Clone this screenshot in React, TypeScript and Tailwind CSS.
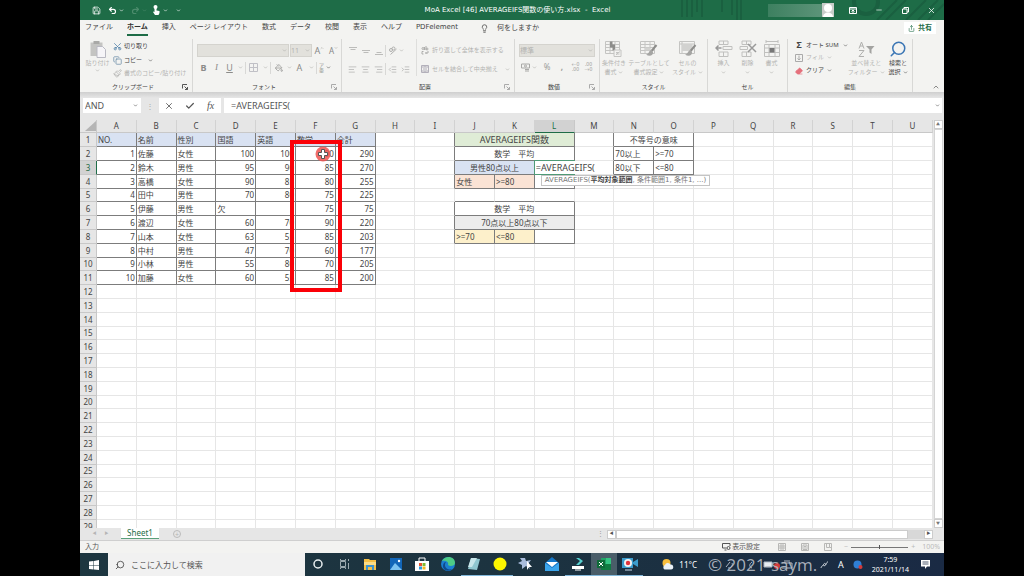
import React from 'react'
import { clsx } from 'clsx'
import {
  AlignCenter, AlignLeft, AlignRight, Check, ChevronDown, ChevronUp, Copy, Eraser,
  IndentDecrease, IndentIncrease, Lightbulb, Minus, PaintBucket, Paintbrush, Redo2, Save, Scissors,
  Search, Share, Undo2, X,
} from 'lucide-react'

const columns = 'ABCDEFGHIJKLMNOPQRSTU'.split('')

const students = [
  ['1', '佐藤', '女性', '100', '100', '90', '290'],
  ['2', '鈴木', '男性', '95', '90', '85', '270'],
  ['3', '高橋', '女性', '90', '85', '80', '255'],
  ['4', '田中', '男性', '70', '80', '75', '225'],
  ['5', '伊藤', '男性', '欠', '', '75', '75'],
  ['6', '渡辺', '女性', '60', '70', '90', '220'],
  ['7', '山本', '女性', '63', '55', '85', '203'],
  ['8', '中村', '男性', '47', '70', '60', '177'],
  ['9', '小林', '男性', '55', '80', '70', '205'],
  ['10', '加藤', '女性', '60', '55', '85', '200'],
]

type CellInfo = { text: string; span?: number; className?: string }

const cells: Record<string, CellInfo> = {
  J1: { text: 'AVERAGEIFS関数', span: 3, className: 'bg-[#dfecd6] text-center text-[9px]' },
  J2: { text: '数学　平均', span: 3, className: 'text-center' },
  J3: { text: '男性80点以上', span: 2, className: 'bg-[#d9e2f2] text-center' },
  J4: { text: '女性', className: 'bg-[#fae3d5]' },
  K4: { text: '>=80', className: 'bg-[#fae3d5]' },
  J6: { text: '数学　平均', span: 3, className: 'text-center' },
  J7: { text: '70点以上80点以下', span: 3, className: 'bg-[#ececec] text-center' },
  J8: { text: '>=70', className: 'bg-[#fdf0cb]' },
  K8: { text: '<=80', className: 'bg-[#fdf0cb]' },
  N1: { text: '不等号の意味', span: 2, className: 'text-center' },
  N2: { text: '70以上' },
  O2: { text: '>=70' },
  N3: { text: '80以下' },
  O3: { text: '<=80' },
}

const headings = ['NO.', '名前', '性別', '国語', '英語', '数学', '合計']
headings.forEach((text, i) => {
  cells[`${columns[i]}1`] = { text, className: 'bg-[#d9e2f2]' }
})
students.forEach((row, r) => {
  row.forEach((text, i) => {
    cells[`${columns[i]}${r + 2}`] = { text, className: /^\d/.test(text) ? 'text-right' : '' }
  })
})

// ranges that carry a black frame
const isBoxed = (c: number, r: number) =>
  (c >= 0 && c <= 6 && r >= 1 && r <= 11) ||
  (c >= 9 && c <= 11 && ((r >= 1 && r <= 4) || (r >= 6 && r <= 8))) ||
  (c >= 13 && c <= 14 && r >= 1 && r <= 3)

function Chevron({ dark }: { dark?: boolean }) {
  return <ChevronDown size={5} strokeWidth={3} className={clsx('shrink-0', dark ? 'text-[#555]' : 'text-[#b0b0ae]')} />
}

function Tool({ label, className, children }: { label: string; className?: string; children: React.ReactNode }) {
  return (
    <button aria-label={label} className={clsx('flex items-center justify-center', className ?? 'w-[13px]')}>
      {children}
    </button>
  )
}

function Launcher({ dark }: { dark?: boolean }) {
  return (
    <svg width="6" height="6" viewBox="0 0 12 12" fill="none" strokeWidth="2" className={dark ? 'stroke-[#555]' : 'stroke-[#aaa]'}>
      <path d="M1 9V1h9M5 5l6 6M11 6v5H6" />
    </svg>
  )
}

function Group({ title, className, launcher, children }: {
  title: string
  className?: string
  launcher?: 'dark' | 'light'
  children: React.ReactNode
}) {
  return (
    <section className={clsx('flex shrink-0 flex-col border-r border-[#d8d8d6]', className)}>
      <div className="flex-1">{children}</div>
      <div className="flex h-[10px] items-center px-1 text-[6px] text-[#444]">
        <span className="flex-1 text-center">{title}</span>
        {launcher && <Launcher dark={launcher === 'dark'} />}
      </div>
    </section>
  )
}

function TitleBar() {
  return (
    <header className="relative flex h-5 items-center bg-[#1e6c47] text-white">
      <svg className="absolute right-0 top-0 h-5 w-[270px]" viewBox="0 0 270 20" fill="none" stroke="#1a6040" strokeWidth="2">
        <path d="M8 0v17M13 0v17M18 0v17M23 0v12M28 0v17M48 0v12M58 0v15M63 0v20M67 0v20" />
        <circle cx="192" cy="2" r="12" strokeWidth="4" />
        <path d="M203 20 223 0M212 20 232 0M232 20 252 0M244 20 264 0M254 20 270 4" />
      </svg>
      <div className="relative flex flex-1 items-center pl-[11px]">
        <Tool label="上書き保存" className="w-[10px]"><Save size={9} /></Tool>
        <Tool label="元に戻す" className="ml-[6px] w-[10px]"><Undo2 size={9} strokeWidth={3} /></Tool>
        <span className="ml-[2px]"><ChevronDown size={5} strokeWidth={3} /></span>
        <Tool label="やり直し" className="ml-[6px] w-[10px] text-[#4d8c6d]"><Redo2 size={9} strokeWidth={3} /></Tool>
        <span className="ml-[2px] text-[#4d8c6d]"><ChevronDown size={5} strokeWidth={3} /></span>
        <Tool label="タッチ/マウス モードの切り替え" className="ml-[4px] w-[10px]">
          <svg width="9" height="10" viewBox="0 0 18 20" fill="#fff">
            <circle cx="7" cy="4" r="4" />
            <path d="M5 4h4v7l6 1v4l-2 4H6l-4-6 1-1 2 1z" />
          </svg>
        </Tool>
        <span className="ml-[2px]"><ChevronDown size={5} strokeWidth={3} /></span>
        <span className="ml-[8px]"><ChevronDown size={5} strokeWidth={3} /></span>
      </div>
      <h1 className="relative font-['DejaVu_Sans','Noto_Sans_CJK_JP',sans-serif] text-[7px]">MoA Excel [46] AVERAGEIFS関数の使い方.xlsx&nbsp; -&nbsp; Excel</h1>
      <div className="relative flex flex-1 items-center justify-end">
        <div className="h-[13px] w-[54px] bg-gradient-to-r from-[#3d8060] to-[#5c9479]" />
        <svg width="12" height="14" viewBox="0 0 12 14" className="mr-[6px] bg-[#c9cdca]" fill="#fff">
          <circle cx="6" cy="5" r="4" />
          <path d="M1 14c0-6 10-6 10 0z" />
        </svg>
        <Tool label="リボンの表示オプション" className="w-[26px]">
          <svg width="8" height="7" viewBox="0 0 16 14" fill="none" stroke="#fff" strokeWidth="2">
            <path d="M1 1h14v12H1zM1 4h14M8 12V7M5 9l3-3 3 3" />
          </svg>
        </Tool>
        <Tool label="最小化" className="w-[26px]"><Minus size={8} strokeWidth={2} /></Tool>
        <Tool label="元に戻す (縮小)" className="w-[26px]">
          <svg width="7" height="7" viewBox="0 0 14 14" fill="none" stroke="#fff" strokeWidth="2">
            <path d="M1 4h9v9H1zM4 4V1h9v9h-3" />
          </svg>
        </Tool>
        <Tool label="閉じる" className="w-[26px]"><X size={9} strokeWidth={2} /></Tool>
      </div>
    </header>
  )
}

const tabs = ['ファイル', 'ホーム', '挿入', 'ページ レイアウト', '数式', 'データ', '校閲', '表示', 'ヘルプ', 'PDFelement']

function TabRow() {
  return (
    <nav className="flex h-4 items-end gap-[14px] whitespace-nowrap pl-[5px] font-['DejaVu_Sans','Noto_Sans_CJK_JP',sans-serif] text-[7px] text-[#444]">
      {tabs.map((tab) => (
        <button
          key={tab}
          className={clsx('h-[15px] border-b-2', tab === 'ホーム' ? 'border-[#1e6c47] font-bold text-[#333]' : 'border-transparent')}
        >
          {tab}
        </button>
      ))}
      <button className="ml-2 flex h-[13px] items-center gap-2 self-center">
        <Lightbulb size={9} />
        何をしますか
      </button>
      <button className="ml-auto mr-2 flex h-3 items-center gap-[3px] self-center bg-white px-1 font-bold text-[#1e6c47]">
        <Share size={7} />
        共有
      </button>
    </nav>
  )
}

function VAlign({ top }: { top: string }) {
  return (
    <svg width="8" height="10" viewBox="0 0 16 20" stroke="#bcbcba" strokeWidth="2">
      <path d={top} />
    </svg>
  )
}

function TableIcon({ children }: { children?: React.ReactNode }) {
  return (
    <svg width="19" height="18" viewBox="0 0 38 36" fill="none" stroke="#c4c4c2" strokeWidth="2">
      <path d="M3 3h28v24H3zM3 9h28M3 15h28M3 21h28M12 3v24M22 3v24" />
      {children}
    </svg>
  )
}

const brush = (
  <>
    <path d="M12 15h10v6H12z" fill="#d2d2d0" stroke="none" />
    <path d="M35 10 25 22" stroke="#8d8d8b" strokeWidth="4" />
    <path d="M25 20c-5 0-4 8-11 9 7 5 15 2 14-5z" fill="#a5a5a3" stroke="none" />
  </>
)

function BigButton({ lines, icon, className, dark }: { lines: string[]; icon: React.ReactNode; className?: string; dark?: boolean }) {
  return (
    <button className={clsx('flex flex-col items-center whitespace-nowrap text-[6px] leading-[9px]', dark ? 'text-[#444]' : 'text-[#b3b3b1]', className)}>
      <span className="flex h-5 items-center">{icon}</span>
      <span>{lines[0]}</span>
      <span className="flex h-[9px] items-center gap-[2px]">
        {lines[1]}
        <Chevron dark={dark} />
      </span>
    </button>
  )
}

function Divider() {
  return <span className="h-3 w-px bg-[#d8d8d6]" />
}

function Ribbon() {
  return (
    <div className="flex h-14 pt-[3px] text-[6px] text-[#b3b3b1]">
      <Group title="クリップボード" className="w-[113px]" launcher="dark">
        <div className="flex gap-[3px] pl-[5px]">
          <button className="flex w-[25px] flex-col items-center whitespace-nowrap leading-[9px]">
            <svg width="18" height="20" viewBox="0 0 36 40" fill="none">
              <path d="M3 7h24v27H3z" fill="#c4c4c2" />
              <path d="M9 4h12v6H9z" fill="#a9a9a7" />
              <path d="M16 15h11l6 6v16H16z" fill="#f6f5f8" stroke="#b9b9c2" strokeWidth="2" />
            </svg>
            <span>貼り付け</span>
            <Chevron />
          </button>
          <div className="flex flex-col text-[#444]">
            <button className="flex h-[14px] items-center gap-[2px]"><Scissors size={9} className="-rotate-90 text-[#4a7ca5]" />切り取り</button>
            <button className="flex h-[14px] items-center gap-[2px]"><Copy size={9} className="text-[#6c8ea8]" />コピー <span className="ml-1"><Chevron dark /></span></button>
            <button className="flex h-[13px] items-center gap-[2px] whitespace-nowrap text-[#b3b3b1]"><Paintbrush size={9} />書式のコピー/貼り付け</button>
          </div>
        </div>
      </Group>

      <Group title="フォント" className="w-[149px]" launcher="light">
        <div className="flex items-center gap-px pl-1 pt-[5px]">
          <label className="relative flex items-center">
            <select aria-label="フォント" className="h-[13px] w-[92px] appearance-none border border-[#d4d3ce] bg-[#e2e1dc]"><option></option></select>
            <span className="absolute right-[2px]"><Chevron /></span>
          </label>
          <label className="relative flex items-center">
            <select aria-label="フォント サイズ" className="h-[13px] w-[22px] appearance-none border border-[#d4d3ce] bg-[#e2e1dc] text-[7px] leading-[10px]"><option>11</option></select>
            <span className="absolute right-[2px]"><Chevron /></span>
          </label>
          <Tool label="フォント サイズの拡大"><span className="text-[9px] text-[#888]">A</span><ChevronUp size={4} strokeWidth={4} className="mb-[5px]" /></Tool>
          <Tool label="フォント サイズの縮小"><span className="text-[8px] text-[#888]">A</span><ChevronDown size={4} strokeWidth={4} className="mb-[5px]" /></Tool>
        </div>
        <div className="flex h-5 items-center pl-1 text-[9px] text-[#8b8b89]">
          <Tool label="太字"><b>B</b></Tool>
          <Tool label="斜体"><i className="font-['Liberation_Serif',serif]">I</i></Tool>
          <Tool label="下線"><u>U</u></Tool>
          <Tool label="下線の種類" className="w-[9px]"><Chevron /></Tool>
          <Divider />
          <Tool label="罫線" className="w-[15px]">
            <svg width="9" height="9" viewBox="0 0 18 18" fill="none" stroke="#c0c0c6" strokeWidth="2"><path d="M1 1h16v16H1zM9 1v16M1 9h16" /></svg>
          </Tool>
          <Tool label="罫線の種類" className="w-[9px]"><Chevron /></Tool>
          <Divider />
          <Tool label="塗りつぶしの色" className="w-[15px]"><PaintBucket size={8} /></Tool>
          <Tool label="塗りつぶしの色の選択" className="w-[6px]"><Chevron /></Tool>
          <Tool label="フォントの色" className="w-[15px]">A</Tool>
          <Tool label="フォントの色の選択" className="w-[9px]"><Chevron /></Tool>
          <Divider />
          <Tool label="ふりがなの表示" className="w-[9px]">
            <span className="flex flex-col text-[5px] leading-[5px]"><span>ア</span><span>亜</span></span>
          </Tool>
          <Chevron dark />
        </div>
      </Group>

      <Group title="配置" className="w-[173px]" launcher="light">
        <div className="flex">
          <div className="flex w-[75px] flex-col border-r border-[#dededc] pl-1">
            <div className="flex h-[23px] items-center">
              <Tool label="上揃え"><VAlign top="M0 3h16M3 7h10" /></Tool>
              <Tool label="上下中央揃え"><VAlign top="M0 9h16M3 13h10" /></Tool>
              <Tool label="下揃え"><VAlign top="M0 17h16M3 13h10" /></Tool>
              <Divider />
              <Tool label="方向">
                <svg width="9" height="9" viewBox="0 0 18 18" fill="none" stroke="#b0b0ae" strokeWidth="2">
                  <circle cx="6" cy="8" r="3" /><circle cx="11" cy="5" r="3" /><path d="M5 17 17 6" />
                </svg>
              </Tool>
              <Chevron />
            </div>
            <div className="flex h-[14px] items-center">
              <Tool label="左揃え"><AlignLeft size={9} /></Tool>
              <Tool label="中央揃え"><AlignCenter size={9} /></Tool>
              <Tool label="右揃え"><AlignRight size={9} /></Tool>
              <Divider />
              <Tool label="インデントを減らす"><IndentDecrease size={9} /></Tool>
              <Tool label="インデントを増やす"><IndentIncrease size={9} /></Tool>
            </div>
          </div>
          <div className="flex flex-col whitespace-nowrap pl-1">
            <button className="flex h-[23px] items-center gap-[3px]">
              <svg width="8" height="9" viewBox="0 0 16 18" fill="none" stroke="#adadab" strokeWidth="2">
                <circle cx="4" cy="5" r="2" /><path d="M7 2v6M10 0v8" /><circle cx="12" cy="6" r="2" /><path d="M5 11H2v5h3M9 14h5v-4M11 12l-2 2 2 2" />
              </svg>
              折り返して全体を表示する
            </button>
            <button className="flex h-[14px] items-center gap-[3px]">
              <svg width="8" height="8" viewBox="0 0 16 16" fill="none" stroke="#b3b0ba" strokeWidth="2"><path d="M1 1h14v14H1zM1 4h14M1 12h14M8 1v3M8 12v3M4 8h8" /></svg>
              セルを結合して中央揃え
              <span className="ml-1"><Chevron /></span>
            </button>
          </div>
        </div>
      </Group>

      <Group title="数値" className="w-[85px]" launcher="light">
        <div className="flex flex-col px-1 pt-[5px]">
          <label className="relative flex items-center">
            <select aria-label="表示形式" className="h-[13px] w-full appearance-none border border-[#d4d3ce] bg-[#e2e1dc] text-[7px] leading-[10px]"><option>標準</option></select>
            <span className="absolute right-[2px]"><Chevron /></span>
          </label>
          <div className="flex h-5 items-center text-[8px] text-[#9b9b99]">
            <Tool label="通貨表示形式">
              <svg width="9" height="9" viewBox="0 0 18 18" fill="none" stroke="#a9a9a7" strokeWidth="2"><path d="M1 2h16v8H1z" /><circle cx="9" cy="6" r="2" /><path d="M8 13h8M8 16h8" /></svg>
            </Tool>
            <Chevron />
            <Tool label="パーセント スタイル" className="w-5">%</Tool>
            <Tool label="桁区切りスタイル" className="w-[10px]"><b>,</b></Tool>
            <span className="mx-px"><Divider /></span>
            <Tool label="小数点以下の表示桁数を増やす"><span className="flex flex-col text-[5px] leading-[5px]"><span>←0</span><span>.00</span></span></Tool>
            <Tool label="小数点以下の表示桁数を減らす"><span className="flex flex-col text-[5px] leading-[5px]"><span>.00</span><span>→0</span></span></Tool>
          </div>
        </div>
      </Group>

      <Group title="スタイル" className="w-[108px]">
        <div className="flex justify-end gap-1 pr-1">
          <BigButton lines={['条件付き', '書式']} icon={
            <TableIcon>
              <path d="M12 3h5v12h-5zM17 9h5v12h-5z" fill="#8d8d8b" stroke="none" />
              <path d="M20 20h14v13H20z" fill="#f3f3f1" /><path d="m24 30 7-7M24 25h7M24 28h7" />
            </TableIcon>
          } />
          <BigButton lines={['テーブルとして', '書式設定']} className="w-[38px]" icon={<TableIcon>{brush}</TableIcon>} />
          <BigButton lines={['セルの', 'スタイル']} icon={
            <svg width="19" height="18" viewBox="0 0 38 36" fill="none" stroke="#c4c4c2" strokeWidth="2">
              <path d="M3 3h30v24H3zM3 8h30M8 3v24" /><path d="M8 8h21v14H8z" fill="#d2d2d0" stroke="none" />{brush}
            </svg>
          } />
        </div>
      </Group>

      <Group title="セル" className="w-[80px]">
        <div className="flex justify-center gap-[6px]">
          <BigButton lines={['挿入', '']} icon={
            <svg width="18" height="18" viewBox="0 0 36 36" fill="none" stroke="#c0c0be" strokeWidth="2">
              <path d="M8 2h18v7H8zM17 2v7M8 24h18v9H8zM17 24v9M16 13h18v6H16z" /><path d="M13 16H2m5-5-5 5 5 5" stroke="#999" strokeWidth="3" />
            </svg>
          } />
          <BigButton lines={['削除', '']} icon={
            <svg width="18" height="18" viewBox="0 0 36 36" fill="none" stroke="#c0c0be" strokeWidth="2">
              <path d="M6 2h18v7H6zM15 2v7M6 24h18v9H6zM15 24v9M2 13h15v6H2z" /><path d="m18 8 16 16M34 8 18 24" stroke="#999" strokeWidth="3" />
            </svg>
          } />
          <BigButton lines={['書式', '']} icon={
            <svg width="18" height="18" viewBox="0 0 36 36" fill="none" stroke="#c0c0be" strokeWidth="2">
              <path d="M3 9h30v24H3zM3 16h30M3 25h30M12 9v24M24 9v24M6 3h24M6 0v6M30 0v6" /><path d="M13 16h10v9H13z" fill="#777" stroke="none" />
            </svg>
          } />
        </div>
      </Group>

      <Group title="編集" className="w-[125px]">
        <div className="flex justify-between pl-[7px] pr-[6px]">
          <div className="flex flex-col whitespace-nowrap text-[#444]">
            <button className="flex h-3 items-center gap-[3px]"><b className="w-2 text-[9px]">Σ</b>オート SUM<span className="ml-px"><Chevron dark /></span></button>
            <button className="flex h-[13px] items-center gap-[3px] text-[#b3b3b1]">
              <svg width="8" height="8" viewBox="0 0 16 16" fill="none" stroke="#aaa" strokeWidth="2"><path d="M1 1h14v14H1zM8 3v9M5 9l3 3 3-3" /></svg>
              フィル<Chevron />
            </button>
            <button className="flex h-[13px] items-center gap-[3px]"><Eraser size={8} className="fill-[#e5707c] text-[#e5707c]" />クリア<Chevron dark /></button>
          </div>
          <div className="flex gap-1">
            <BigButton lines={['並べ替えと', 'フィルター']} icon={
              <svg width="17" height="17" viewBox="0 0 34 34" fill="none" stroke="#b0b0ae" strokeWidth="2">
                <path d="m2 15 5-13 5 13M4 10h6M2 19h10L2 31h10" /><path d="M16 10h17l-6 7v9l-4-3v-6z" fill="#a3a3a1" stroke="none" />
              </svg>
            } />
            <BigButton dark lines={['検索と', '選択']} icon={<Search size={18} strokeWidth={2} className="-scale-x-100 text-[#3b76b5]" />} />
          </div>
        </div>
      </Group>
      <button aria-label="リボンを折りたたむ" className="mb-px ml-auto mr-1 self-end text-[#555]"><ChevronUp size={8} /></button>
    </div>
  )
}

function FormulaBar() {
  return (
    <div className="bg-[#e6e6e6]">
      <div className="h-[6px] bg-gradient-to-b from-[#cfcfcf] to-[#e6e6e6]" />
      <div className="flex h-[15px] items-stretch pl-[3px] pr-[2px] text-[8px] text-[#555]">
        <label className="relative flex w-[58px] items-center bg-white">
          <input aria-label="名前ボックス" defaultValue="AND" className="w-full bg-transparent pl-[2px] text-[9px] outline-none" />
          <span className="absolute right-[3px]"><Chevron dark /></span>
        </label>
        <span className="flex w-[18px] items-center justify-center text-[#aaa]">⋮</span>
        <div className="flex w-[62px] items-center justify-around bg-white text-[#555]">
          <Tool label="キャンセル"><X size={10} /></Tool>
          <Tool label="入力"><Check size={10} strokeWidth={3} /></Tool>
          <Tool label="関数の挿入"><i className="font-['Liberation_Serif',serif] text-[10px]">fx</i></Tool>
        </div>
        <label className="ml-[3px] flex flex-1 items-center bg-white pr-[2px]">
          <input aria-label="数式バー" defaultValue="=AVERAGEIFS(" className="min-w-0 flex-1 bg-transparent pl-[7px] text-[9px] outline-none" />
          <Chevron dark />
        </label>
      </div>
      <div className="h-[7px]" />
    </div>
  )
}

function ActiveCell() {
  return (
    <>
      <input
        aria-label="L3"
        defaultValue="=AVERAGEIFS("
        className="absolute left-0 top-0 z-10 h-[13px] w-[63px] bg-white pl-px text-[9px] outline-none"
      />
      <div className="pointer-events-none absolute -inset-px z-20 border border-r-0 border-[#4f9a76]" />
      <div className="absolute left-[6px] top-[14px] z-20 whitespace-nowrap border border-[#c4c4c4] bg-white px-[3px] font-['DejaVu_Sans','Noto_Sans_CJK_JP',sans-serif] text-[7px] leading-[9px] text-[#777]">
        AVERAGEIFS(<b className="text-[#444]">平均対象範囲</b>, 条件範囲1, 条件1, ...)
      </div>
    </>
  )
}

function SheetRow({ row }: { row: number }) {
  const items: React.ReactNode[] = []
  for (let c = 0; c < columns.length;) {
    const id = `${columns[c]}${row}`
    const info = cells[id]
    const span = info?.span ?? 1
    const last = c + span - 1
    const active = id === 'L3'
    items.push(
      <td
        key={id}
        colSpan={span}
        className={clsx(
          'whitespace-nowrap border-b border-r px-px',
          isBoxed(last, row) || isBoxed(last + 1, row) ? 'border-r-[#7c7c7c]' : 'border-r-[#e6e6e6]',
          isBoxed(c, row) || isBoxed(c, row + 1) ? 'border-b-[#7c7c7c]' : 'border-b-[#e6e6e6]',
          active && 'relative',
          info?.className,
        )}
      >
        {active ? <ActiveCell /> : info?.text}
      </td>,
    )
    c += span
  }
  return (
    <tr className={row % 5 === 0 ? 'h-[13px]' : 'h-[14px]'}>
      <th className={clsx('border-b border-r text-center font-normal', row === 3 ? 'border-b-[#c8c8c8] border-r-[#1e6c47] bg-[#d2d2d2] text-[#1e6c47]' : 'border-[#c8c8c8] bg-[#e6e6e6]')}>
        {row}
      </th>
      {items}
    </tr>
  )
}

function Sheet() {
  return (
    <main className="flex min-h-0 flex-1 bg-[#e6e6e6]">
      <div className="relative min-w-0 flex-1 overflow-hidden">
        <table className="w-full table-fixed border-separate border-spacing-0 bg-white text-[8px] leading-[12px] text-[#444]">
          <thead>
            <tr className="h-[13px]">
              <th className="w-[17px] border-b border-r border-[#c8c8c8] bg-[#e6e6e6]">
                <svg width="11" height="10" viewBox="0 0 11 10" className="ml-auto" fill="#b5b5b5"><path d="M11 0v10H0z" /></svg>
              </th>
              {columns.map((name) => (
                <th
                  key={name}
                  className={clsx('border-b border-r text-center font-normal', name === 'L' ? 'border-b-[#1e6c47] border-r-[#c8c8c8] bg-[#d2d2d2] text-[#1e6c47]' : 'border-b-[#c8c8c8] border-r-[#d2d2d2] bg-[#e6e6e6]')}
                >
                  {name}
                </th>
              ))}
            </tr>
          </thead>
          <tbody>
            {Array.from({ length: 29 }, (_, i) => <SheetRow key={i} row={i + 1} />)}
          </tbody>
        </table>
        <div className="absolute left-[210px] top-[20px] h-[152px] w-[52px] border-4 border-[#fb0007]" />
        <svg className="absolute left-[235px] top-[26px]" width="16" height="16" viewBox="0 0 16 16">
          <circle cx="8" cy="8" r="7.5" fill="#ef5350" fillOpacity="0.85" />
          <path d="M6.5 3.5h3v3h3v3h-3v3h-3v-3h-3v-3h3z" fill="#fff" stroke="#555" strokeWidth="1" />
        </svg>
      </div>
      <div className="flex w-[11px] flex-col items-center pr-px">
        <button aria-label="上へスクロール" className="flex h-[9px] w-[9px] items-center justify-center border border-[#ccc] bg-white text-[4px] leading-none text-[#777]">▲</button>
        <div className="w-[9px] flex-1 border border-[#d4d4d4] bg-white" />
        <button aria-label="下へスクロール" className="flex h-[9px] w-[9px] items-center justify-center border border-[#ccc] bg-white text-[4px] leading-none text-[#777]">▼</button>
      </div>
    </main>
  )
}

function SheetTabs() {
  return (
    <div className="flex h-[13px] items-start border-b border-[#cfcfcf] bg-[#e6e6e6] text-[4px] text-[#b5b5b5]">
      <div className="flex h-3 w-[41px] items-center justify-center gap-2"><span>◀</span><span>▶</span></div>
      <button className="h-[11px] w-[38px] border-b border-[#5aa07b] bg-white text-[8px] leading-[10px] text-[#1e6c47]">Sheet1</button>
      <button aria-label="新しいシート" className="ml-[14px] mt-[2px] flex size-2 items-center justify-center rounded-full border border-[#bbb] text-[7px] leading-none">+</button>
      <div className="ml-auto flex h-3 w-[347px] items-center pr-[11px]">
        <span className="w-[10px] text-[7px] text-[#999]">⋮</span>
        <button aria-label="左へスクロール" className="flex size-[9px] items-center justify-center border border-[#ccc] bg-white text-[#555]">◀</button>
        <div className="h-[9px] flex-1 border border-[#ccc] bg-white" />
        <div className="h-[9px] w-4 bg-[#d8d8d8]" />
        <button aria-label="右へスクロール" className="flex size-[9px] items-center justify-center border border-[#ccc] bg-white text-[#555]">▶</button>
      </div>
    </div>
  )
}

function StatusBar() {
  return (
    <footer className="flex h-3 items-center bg-[#f3f3f1] pl-[5px] pr-1 text-[7px] text-[#555]">
      <span>入力</span>
      <button className="ml-auto flex items-center gap-px">
        <svg width="9" height="8" viewBox="0 0 18 16" fill="none" stroke="#555" strokeWidth="2"><path d="M9 10H1V1h15v5M5 14h4" /><circle cx="13" cy="10" r="3" /></svg>
        表示設定
      </button>
      <div className="ml-[18px] flex gap-[15px]">
        {['M1 1h14v14H1zM1 6h14M1 10h14M6 1v14M10 1v14', 'M1 1h14v14H1zM4 4h8v9H4zM6 7h4M6 10h4', 'M1 1h14v14H1zM5 1v8h6V1M11 9h4'].map((d) => (
          <svg key={d} width="8" height="8" viewBox="0 0 16 16" fill="none" stroke="#b8b8b6" strokeWidth="2"><path d={d} /></svg>
        ))}
      </div>
      <span className="ml-3 text-[#bbb]">−</span>
      <label className="relative mx-[3px] flex h-2 w-[57px] items-center">
        <span className="h-px w-full bg-[#777]" />
        <span className="absolute left-[28px] h-1 w-px bg-[#555]" />
        <input type="range" aria-label="ズーム" className="absolute inset-0 w-full opacity-0" />
      </label>
      <span className="text-[#bbb]">+</span>
      <span className="ml-[7px] text-[#bbb]">100%</span>
    </footer>
  )
}

const apps: { name: string; open?: boolean; icon: React.ReactNode }[] = [
  { name: 'Cortana', icon: <circle cx="13" cy="12" r="4" fill="none" stroke="#e8eef0" strokeWidth="1.5" /> },
  { name: 'タスク ビュー', icon: <path d="M9.5 9.5h5v5h-5zM9.500 7v1.500h5V7M9.500 17v-1.500h5V17M17.500 7v2M17.500 11v6" fill="none" stroke="#9aa8ae" /> },
  { name: 'エクスプローラー', icon: <><path d="M7 7h5l1 1h6v10H7z" fill="#f5bf45" /><path d="M7 10h12v3H7z" fill="#fbdc86" /><path d="M9 13h8v5h-2v-3h-4v3H9z" fill="#3c93d0" /></> },
  { name: 'フォト', icon: <><path d="M7 6h12v12H7z" fill="#1266b8" /><path d="m7 18 5-7 7 7z" fill="#7cc3f1" /><circle cx="16" cy="9" r="1.200" fill="#fff" /></> },
  { name: 'Microsoft Store', icon: <><path d="M10 9V6h6v3" fill="none" stroke="#fff" /><path d="M6 9h14v10H6z" fill="#fff" /><path d="M10 11h3v3h-3z" fill="#e8502c" /><path d="M13.500 11h3v3h-3z" fill="#7db92f" /><path d="M10 14.500h3v3h-3z" fill="#2a9be0" /><path d="M13.500 14.500h3v3h-3z" fill="#f5b921" /></> },
  { name: 'Microsoft Edge', icon: <><circle cx="13" cy="12" r="7" fill="#1b7fd1" /><path d="M7 9c3-6 13-5 13 2 0 3-5 4-7 2 1-3-2-5-6-4z" fill="#4ecb86" /><path d="M11 10c-3 4 1 9 6 7-3 3-9 2-9-3 0-2 1-4 3-4z" fill="#114a8c" /></> },
  { name: 'メモ帳', open: true, icon: <><path d="m10 6 9 1-3 11-9-1z" fill="#8fc6cf" /><path d="m10 6 6 0-5 9-4 0z" fill="#c8e6ea" /></> },
  { name: 'マーカー', open: true, icon: <circle cx="13" cy="12" r="6.500" fill="#fdf600" /> },
  { name: 'スター', icon: <><path d="m12 6 1 3 5-1-3 4 2 5-4-3-4 3 0-4-4-2 4-2-2-3z" fill="#a9bddd" /><path d="m14 9 5 6-3 0-2 3z" fill="#fff" /></> },
  { name: 'メール', icon: <><path d="m6 11 7-6 7 6v8H6z" fill="#1577c8" /><path d="M7 10h12l-6 5z" fill="#fff" /><path d="m6 11 7 5 7-5v8H6z" fill="#3ba5ec" /></> },
  { name: 'ダウンロード', open: true, icon: <><path d="m11 6 4 3-4 4h3l4-4-4-3z" fill="#54d0cf" /><path d="M7 14h12v3H7z" fill="#fff" /><path d="M10 18h6" stroke="#fff" /></> },
  { name: 'Excel', open: true, icon: <><path d="M10 6h10v12H10z" fill="#21a366" /><path d="M15 6h5v6h-5z" fill="#33c481" /><path d="M10 12h10v6H10z" fill="#107c41" /><path d="M6 8h8v8H6z" fill="#0f6b39" /><path d="m8 10 4 4M12 10l-4 4" stroke="#fff" /></> },
  { name: 'レコーダー', open: true, icon: <><path d="M5 6h11v10H5zM16 10l5-3v8l-5-3z" fill="#3b9ccd" /><circle cx="11" cy="11" r="4" fill="#f3f3f3" /><circle cx="11" cy="11" r="2.200" fill="#e2343b" /><path d="M8 18h7" stroke="#cde" /></> },
]

function Taskbar() {
  return (
    <div className="relative flex h-[23px] items-stretch bg-gradient-to-r from-[#1d3640] via-[#1c3340] to-[#1a2a44] text-[7px] text-white">
      <button aria-label="スタート" className="flex w-7 items-center justify-center">
        <svg width="10" height="10" viewBox="0 0 20 20" fill="#fff"><path d="m0 3 9-1v8H0zM10 2l10-2v10H10zM0 11h9v8l-9-1zM10 11h10v9l-10-1z" /></svg>
      </button>
      <label className="flex w-[197px] items-center gap-[6px] bg-[#f1f1f1] pl-[7px] text-[#444]">
        <Search size={10} className="-scale-x-100" />
        <input aria-label="検索" placeholder="ここに入力して検索" className="min-w-0 flex-1 bg-transparent text-[8px] outline-none placeholder:text-[#555]" />
      </label>
      {apps.map((app) => (
        <button
          key={app.name}
          aria-label={app.name}
          className={clsx('w-[26px] border-b', app.open ? 'border-[#83b9dc]' : 'border-transparent', app.name === 'Excel' && 'bg-[#4a5e69]')}
        >
          <svg width="26" height="22" viewBox="0 1 26 22">{app.icon}</svg>
        </button>
      ))}
      <button className="ml-auto flex items-center gap-[5px]">
        <svg width="13" height="13" viewBox="0 0 26 26"><circle cx="11" cy="10" r="8" fill="#f8bd3b" /><path d="M7 23a5 5 0 0 1 1-9 6 6 0 0 1 11-1 5 5 0 0 1 1 10z" fill="#eaf0f6" /></svg>
        <span className="text-[8px]">11°C</span>
      </button>
      <div className="relative ml-[11px] flex w-[112px] items-center">
        <svg width="110" height="14" viewBox="0 0 110 14" fill="none" stroke="#aeb8c4" className="absolute">
          <path d="M18 9l4-5M20 10c4 0 5-3 4-5M44 4c-3 2-3 5 0 6M74 5h10v5H74M76 3h6" />
          <path d="M56 4h8v5h-8z" fill="#e8edf2" />
          <circle cx="69" cy="8" r="3" fill="#d63a3a" stroke="none" />
        </svg>
        <span className="relative whitespace-nowrap font-['Open_Sans',sans-serif] text-[17px] leading-none text-[#b9bfc8]/90">© 2021-saym.</span>
      </div>
      <div className="flex items-center gap-[9px] text-[9px]">
        <svg width="9" height="9" viewBox="0 0 18 18" fill="none" stroke="#c4ccd4" strokeWidth="2"><path d="M2 16c0-4 4-4 5-7s5-3 4 0-5 4-4 0M9 11c4 0 4-7 7-8" /></svg>
        <span>A</span>
        <svg width="10" height="10" viewBox="0 0 20 20"><circle cx="9" cy="9" r="8" fill="#2f7fd6" /><circle cx="15" cy="14" r="4" fill="#d63a3a" /></svg>
      </div>
      <div className="ml-[9px] flex flex-col justify-center text-center leading-[10px]">
        <time>7:59</time>
        <time>2021/11/14</time>
      </div>
      <button aria-label="通知" className="ml-[11px] mr-[13px] flex items-center">
        <svg width="11" height="11" viewBox="0 0 22 22"><path d="M2 2h18v13h-6l-4 5v-5H2z" fill="#fff" /><path d="M5 6h12M5 10h12" stroke="#1a2a44" strokeWidth="1.500" /></svg>
      </button>
    </div>
  )
}

export default function App() {
  return (
    <div lang="ja" className="h-screen bg-black px-20 font-['Noto_Sans','Noto_Sans_CJK_JP',sans-serif]">
      <div className="flex h-full flex-col overflow-hidden bg-[#f3f3f1]">
        <TitleBar />
        <TabRow />
        <Ribbon />
        <FormulaBar />
        <Sheet />
        <SheetTabs />
        <StatusBar />
        <Taskbar />
      </div>
    </div>
  )
}
